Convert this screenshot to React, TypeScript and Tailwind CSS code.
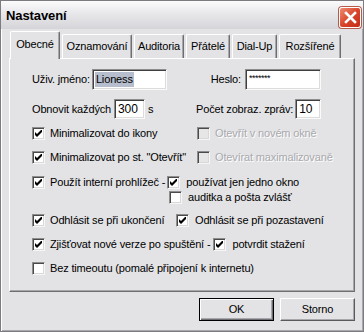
import React from 'react';

function Check({ checked = false, disabled = false }: { checked?: boolean; disabled?: boolean }) {
  return (
    <span
      className={
        'inline-flex items-center justify-center w-[13px] h-[13px] shrink-0 border border-t-[#8d8d8d] border-l-[#8d8d8d] border-r-[#f6f6f6] border-b-[#f6f6f6] shadow-[inset_1px_1px_0_#4a4a4a,inset_-1px_-1px_0_#d8d8d8] ' +
        (disabled ? 'bg-[#e6e6e6]' : 'bg-white')
      }
    >
      {checked && (
        <svg width="7" height="7" viewBox="0 0 7 7" className="block">
          <path d="M0 2v3l2 2 5-5V-1L2 4z" fill="#000" />
        </svg>
      )}
    </span>
  );
}

function Field({ w, children }: { w: string; children?: React.ReactNode }) {
  return (
    <span
      className={
        'flex items-center h-full bg-white border border-t-[#8d8d8d] border-l-[#8d8d8d] border-r-[#fafafa] border-b-[#fafafa] shadow-[inset_1px_1px_0_#3f3f3f,inset_-1px_-1px_0_#dcdcdc] pl-[2px] ' +
        w
      }
    >
      {children}
    </span>
  );
}

function Label({ children, disabled = false }: { children: React.ReactNode; disabled?: boolean }) {
  return (
    <span className={disabled ? 'text-[#a9a9ad] [text-shadow:1px_1px_0_#ffffff] whitespace-nowrap' : 'whitespace-nowrap'}>
      {children}
    </span>
  );
}

const tabs = [
  { name: 'Obecné', w: 'w-[50px]' },
  { name: 'Oznamování', w: 'w-[70px]' },
  { name: 'Auditoria', w: 'w-[50px]' },
  { name: 'Přátelé', w: 'w-[44px]' },
  { name: 'Dial-Up', w: 'w-[45px]' },
  { name: 'Rozšířené', w: 'w-[62px]' },
];

export default function App() {
  return (
    <div className="w-[364px] h-[332px] flex flex-col bg-[#e3e3e5] border border-[#7b7b80] shadow-[inset_1px_1px_0_#ffffff,inset_-1px_-1px_0_#a8a8ac] font-['Liberation_Sans',Arial,sans-serif] text-[11px] tracking-[-0.15px] leading-none text-black overflow-hidden">
      {/* title bar */}
      <div className="h-[28px] shrink-0 flex items-center justify-between pl-[5px] pr-[2px] bg-gradient-to-b from-[#fbfbfc] via-[#e6e6e9] to-[#d5d5d9]">
        <span className="font-bold text-[13px] tracking-[-0.1px]">Nastavení</span>
        <button className="w-[22px] h-[21px] mt-[4px] rounded-[3px] border border-[#ffffff] bg-gradient-to-br from-[#ee8a70] via-[#d9452a] to-[#c22c16] shadow-[0_0_0_1px_#b85a4a] flex items-center justify-center">
          <svg width="13" height="13" viewBox="0 0 13 13">
            <path d="M2 2l9 9M11 2l-9 9" stroke="#fff" strokeWidth="2.6" strokeLinecap="square" />
          </svg>
        </button>
      </div>

      <div className="pl-[8px] pr-[8px] pt-[2px]">
        {/* tabs */}
        <div className="flex items-end gap-[2px] pl-[2px] h-[27px]">
          {tabs.map((t, i) =>
            i === 0 ? (
              <div
                key={t.name}
                className={t.w + ' relative z-10 h-[28px] -mb-[1px] -ml-[1px] flex items-start justify-center pt-[7px] bg-[#e3e3e5] border-l border-t border-r border-l-white border-t-white border-r-[#6e6e72] rounded-t-[2px] shadow-[inset_-1px_0_0_#a8a8ac]'}
              >
                {t.name}
              </div>
            ) : (
              <div
                key={t.name}
                className={t.w + ' h-[24px] flex items-start justify-center pt-[6px] bg-[#e3e3e5] border-l border-t border-r border-l-white border-t-white border-r-[#6e6e72] rounded-t-[2px] shadow-[inset_-1px_0_0_#a8a8ac]'}
              >
                {t.name}
              </div>
            )
          )}
        </div>

        {/* panel */}
        <div className="h-[234px] border border-l-white border-t-white border-r-[#6e6e72] border-b-[#6e6e72] shadow-[inset_-1px_-1px_0_#a8a8ac] pt-[10px]">
          {/* row 1 */}
          <div className="flex h-[21px]">
            <div className="w-[186px] pl-[22px] flex items-center gap-[2px]">
              <Label>Uživ. jméno:</Label>
              <Field w="w-[75px]">
                <span className="bg-[#b6bdcc] px-[1px] py-[2px]">Lioness</span>
              </Field>
            </div>
            <div className="w-[125px] flex items-center justify-end gap-[4px]">
              <Label>Heslo:</Label>
              <Field w="w-[76px]">
                <span className="text-[9px] tracking-[-0.5px] pl-[1px] -mt-[3px]">*******</span>
              </Field>
            </div>
          </div>

          {/* row 2 */}
          <div className="flex h-[20px] mt-[9px]">
            <div className="w-[186px] pl-[22px] flex items-center">
              <Label>Obnovit každých</Label>
              <span className="ml-[3px] h-full flex">
                <Field w="w-[31px]">
                  <span className="text-[12px] pl-[1px]">300</span>
                </Field>
              </span>
              <span className="ml-[3px]">s</span>
            </div>
            <div className="w-[125px] flex items-center justify-end gap-[2px]">
              <Label>Počet zobraz. zpráv:</Label>
              <Field w="w-[26px]">
                <span className="text-[12px] pl-[1px]">10</span>
              </Field>
            </div>
          </div>

          {/* row 3 */}
          <div className="flex items-center h-[13px] mt-[8px]">
            <div className="w-[186px] pl-[22px] flex items-center gap-[5px]">
              <Check checked />
              <Label>Minimalizovat do ikony</Label>
            </div>
            <div className="pl-[1px] flex items-center gap-[5px]">
              <Check disabled />
              <Label disabled>Otevřít v novém okně</Label>
            </div>
          </div>

          {/* row 4 */}
          <div className="flex items-center h-[13px] mt-[11px]">
            <div className="w-[186px] pl-[22px] flex items-center gap-[5px]">
              <Check checked />
              <Label>Minimalizovat po st. "Otevřít"</Label>
            </div>
            <div className="pl-[1px] flex items-center gap-[5px]">
              <Check disabled />
              <Label disabled>Otevírat maximalizovaně</Label>
            </div>
          </div>

          {/* row 5 */}
          <div className="flex items-center h-[13px] mt-[12px] pl-[22px]">
            <Check checked />
            <span className="ml-[5px]">
              <Label>Použít interní prohlížeč -</Label>
            </span>
            <span className="ml-[2px]">
              <Check checked />
            </span>
            <span className="ml-[6px]">
              <Label>používat jen jedno okno</Label>
            </span>
          </div>
          <div className="flex items-center h-[13px] mt-[2px] pl-[159px] gap-[6px]">
            <Check />
            <Label>auditka a pošta zvlášť</Label>
          </div>

          {/* row 6 */}
          <div className="flex items-center h-[13px] mt-[10px]">
            <div className="w-[166px] pl-[22px] flex items-center gap-[5px]">
              <Check checked />
              <Label>Odhlásit se při ukončení</Label>
            </div>
            <div className="flex items-center gap-[6px]">
              <Check checked />
              <Label>Odhlásit se při pozastavení</Label>
            </div>
          </div>

          {/* row 7 */}
          <div className="flex items-center h-[13px] mt-[11px] pl-[22px]">
            <Check checked />
            <span className="ml-[5px]">
              <Label>Zjišťovat nové verze po spuštění -</Label>
            </span>
            <span className="ml-[3px]">
              <Check checked />
            </span>
            <span className="ml-[6px]">
              <Label>potvrdit stažení</Label>
            </span>
          </div>

          {/* row 8 */}
          <div className="flex items-center h-[13px] mt-[11px] pl-[22px] gap-[5px]">
            <Check />
            <Label>Bez timeoutu (pomalé připojení k internetu)</Label>
          </div>
        </div>

        {/* buttons */}
        <div className="flex justify-end gap-[6px] mt-[6px]">
          <button className="w-[75px] h-[23px] bg-[#e3e3e5] border border-black shadow-[inset_1px_1px_0_#ffffff,inset_-1px_-1px_0_#6e6e72,inset_-2px_-2px_0_#a8a8ac] text-[11px]">
            OK
          </button>
          <button className="w-[75px] h-[23px] bg-[#e3e3e5] border border-l-white border-t-white border-r-[#5a5a5e] border-b-[#5a5a5e] shadow-[inset_-1px_-1px_0_#a8a8ac] text-[11px]">
            Storno
          </button>
        </div>
      </div>
    </div>
  );
}
